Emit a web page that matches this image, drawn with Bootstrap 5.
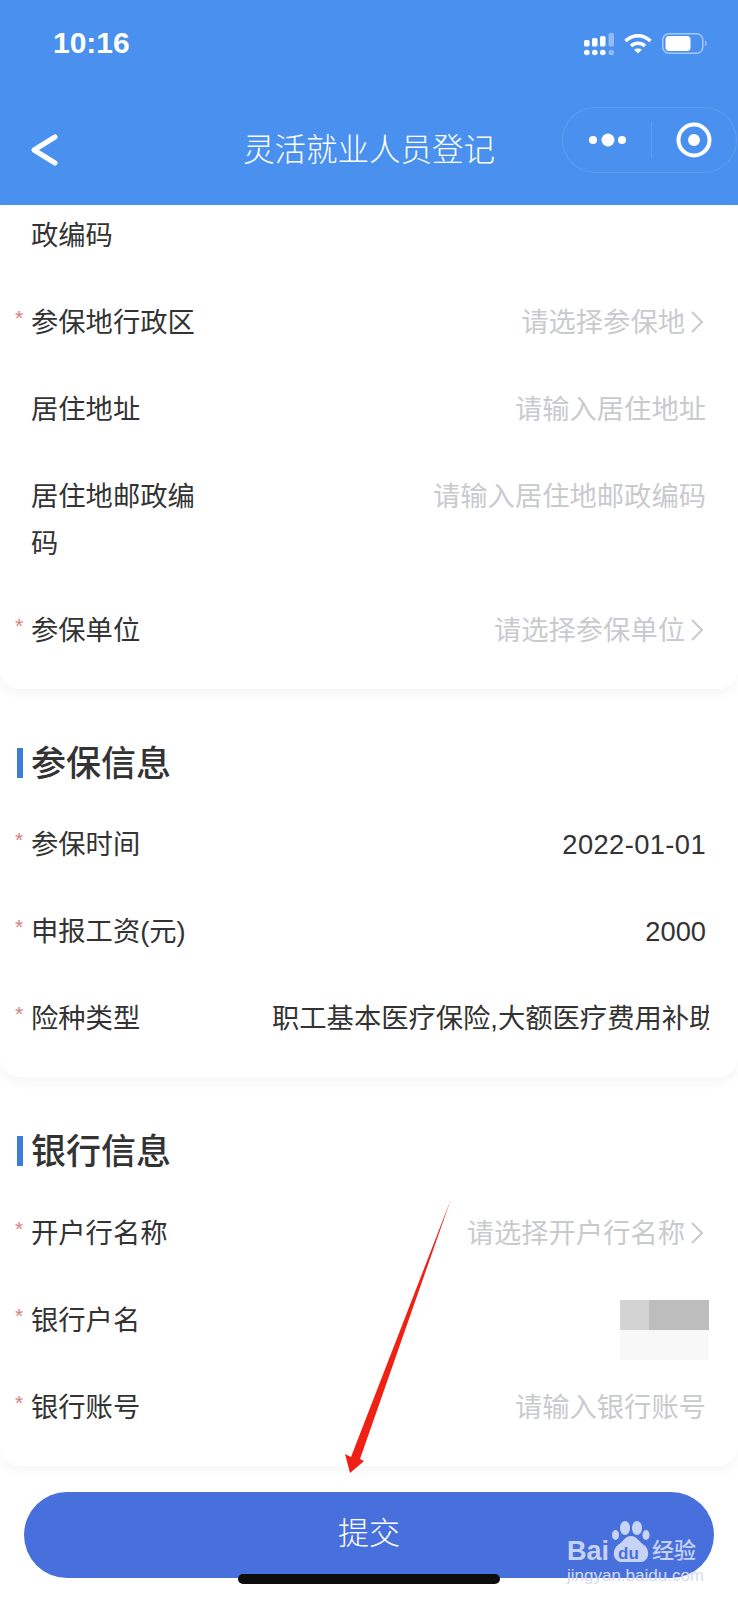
<!DOCTYPE html>
<html lang="zh-CN">
<head>
    <meta charset="UTF-8">
    <title>灵活就业人员登记</title>
    <link rel="stylesheet" href="https://cdn.jsdelivr.net/npm/bootstrap@5.3.0/dist/css/bootstrap.min.css">
    <style>
        html, body { height: 1600px; overflow: hidden; }
        body { font-family: "Liberation Sans", "Noto Sans CJK SC", sans-serif; color: #333; background: #fff; position: relative; }
        .app-head { height: 205px; background: #4a90ee; color: #fff; }
        .status-row { height: 107px; padding: 26px 31px 0 53px; }
        .clock { font-size: 30px; font-weight: 700; line-height: 34px; }
        .status-icons { gap: 10px; margin-top: 7px; }
        .title-row { height: 98px; position: relative; }
        .back-icon { position: absolute; left: 30px; top: 27px; }
        .page-title { position: absolute; left: 0; width: 738px; top: 21px; text-align: center; font-size: 31.5px; line-height: 44px; font-weight: 300; }
        .capsule { position: absolute; left: 562px; top: 0; width: 175px; height: 66px; border: 1px solid rgba(255,255,255,.12); border-radius: 33px; }
        .capsule-line { width: 1px; height: 36px; background: rgba(255,255,255,.12); }
        .form-card { border: 0; border-radius: 0 0 20px 20px; box-shadow: 0 6px 12px rgba(0,0,0,.035); background: #fff; }
        .first-card { padding-bottom: 15px; }
        .later-card { padding-bottom: 15px; margin-top: 24px; }
        .head-block { height: 88.5px; padding: 29px 0 0 17px; }
        .head-bar { width: 6px; height: 30px; background: #3b7dd8; margin: 6px 8px 0 0; }
        .head-text { font-size: 35px; line-height: 44px; font-weight: 500; color: #333; }
        .form-row { position: relative; padding: 20px 32px 20px 31px; font-size: 27.3px; line-height: 47px; }
        .form-row.cut-row { padding-top: 6.5px; }
        .form-row.need::before { content: "*"; position: absolute; left: 15px; top: 15px; font-size: 21px; color: #d98080; }
        .row-label { width: 166px; flex: none; color: #333; }
        .row-value { color: #333; }
        .date-value { letter-spacing: .4px; }
        .row-hint { color: #c9cace; }
        .row-clip { width: 437px; margin-left: auto; margin-right: -3px; overflow: hidden; white-space: nowrap; }
        .hint-chev { margin: 0 2px 0 5px; }
        .blur-box { width: 89px; height: 60px; margin: 3.5px -3px -16.5px 0; display: grid; grid-template-columns: 29px 60px; grid-template-rows: 30px 30px; }
        .blur-a { background: #d3d3d3; }
        .blur-b { background: #bdbdbd; }
        .blur-c { background: #f8f8f8; }
        .submit-wrap { padding: 26px 24px 23px 24px; }
        .submit-btn { height: 86px; width: 100%; background: #4870dc; border: 0; color: #fff; font-size: 31px; font-weight: 300; }
        .home-bar { position: absolute; left: 238px; top: 1574px; width: 262px; height: 10px; border-radius: 5px; background: #0d0d0d; }
        .red-arrow { position: absolute; left: 340px; top: 1195px; }
        .water-mark { position: absolute; left: 566px; top: 1518px; width: 140px; height: 70px; color: rgba(255,255,255,.7); }
        .wm-paw { position: absolute; left: 46px; top: 3px; }
        .wm-bai { position: absolute; left: 1px; top: 19px; font: 700 27px/28px "Liberation Sans", sans-serif; }
        .wm-du { position: absolute; left: 52px; top: 28px; font: 700 17px/16px "Liberation Sans", sans-serif; color: #4870dc; }
        .wm-cn { position: absolute; left: 86px; top: 19px; font-size: 22px; line-height: 28px; font-weight: 500; white-space: nowrap; }
        .wm-url { position: absolute; left: 1px; top: 47.5px; font: 400 17px/20px "Liberation Sans", sans-serif; white-space: nowrap; color: #d5dcf0; }
    </style>
</head>
<body>
<header class="app-head">
    <div class="status-row d-flex justify-content-between">
        <span class="clock">10:16</span>
        <div class="status-icons d-flex align-items-start">
            <svg width="30" height="23" viewBox="0 0 30 23" fill="#fff">
                <rect x="0" y="7" width="5.5" height="6.5" rx="1.5"/><circle cx="2.8" cy="19.5" r="2.8"/>
                <rect x="8" y="5" width="5.5" height="8.5" rx="1.5"/><circle cx="10.8" cy="19.5" r="2.8"/>
                <rect x="16" y="3" width="5.5" height="10.5" rx="1.5"/><circle cx="18.8" cy="19.5" r="2.8"/>
                <g opacity=".4"><rect x="24.5" y="0" width="5.5" height="13.5" rx="1.5"/><circle cx="27.3" cy="19.5" r="2.8"/></g>
            </svg>
            <svg width="28" height="21" viewBox="0 0 28 21" fill="none" stroke="#fff" stroke-width="3.6">
                <path d="M1.5 8C9 1 19 1 26.5 8"/>
                <path d="M7 13C11 9.3 17 9.3 21 13"/>
                <path d="M14 20.5L10 16.5C12 15 16 15 18 16.5Z" fill="#fff" stroke="none"/>
            </svg>
            <svg width="45" height="21" viewBox="0 0 45 21" fill="none">
                <rect x=".8" y=".8" width="40" height="19.4" rx="6" stroke="#fff" stroke-opacity=".5" stroke-width="1.5"/>
                <rect x="3.5" y="3" width="25" height="15" rx="3.5" fill="#fff"/>
                <path d="M43 7.5C45 8.5 45 12.5 43 13.5Z" fill="#fff" fill-opacity=".5"/>
            </svg>
        </div>
    </div>
    <div class="title-row">
        <svg class="back-icon" width="28" height="32" viewBox="0 0 28 32" fill="none" stroke="#fff" stroke-width="5" stroke-linecap="round" stroke-linejoin="round">
            <path d="M25 3L4 16L25 29"/>
        </svg>
        <div class="page-title">灵活就业人员登记</div>
        <div class="capsule d-flex align-items-center">
            <svg class="ms-4" width="42" height="16" viewBox="0 0 42 16" fill="#fff"><circle cx="6" cy="8" r="4"/><circle cx="21" cy="8" r="6.5"/><circle cx="35" cy="8" r="4"/></svg>
            <span class="capsule-line ms-auto"></span>
            <svg class="mx-4" width="36" height="36" viewBox="0 0 36 36" fill="none"><circle cx="18" cy="18" r="15.5" stroke="#fff" stroke-width="4"/><circle cx="18" cy="18" r="6" fill="#fff"/></svg>
        </div>
    </div>
</header>

<main>
    <section class="card form-card first-card">
        <div class="form-row cut-row d-flex"><span class="row-label">政编码</span></div>
        <div class="form-row need d-flex"><span class="row-label">参保地行政区</span><span class="row-hint ms-auto d-flex align-items-center">请选择参保地<svg class="hint-chev" width="14" height="24" viewBox="0 0 14 24" fill="none" stroke="#c9cace" stroke-width="2"><path d="M2 2L12 12L2 22"/></svg></span></div>
        <div class="form-row d-flex"><span class="row-label">居住地址</span><span class="row-hint ms-auto">请输入居住地址</span></div>
        <div class="form-row d-flex"><span class="row-label">居住地邮政编码</span><span class="row-hint ms-auto">请输入居住地邮政编码</span></div>
        <div class="form-row need d-flex"><span class="row-label">参保单位</span><span class="row-hint ms-auto d-flex align-items-center">请选择参保单位<svg class="hint-chev" width="14" height="24" viewBox="0 0 14 24" fill="none" stroke="#c9cace" stroke-width="2"><path d="M2 2L12 12L2 22"/></svg></span></div>
    </section>

    <section class="card form-card later-card">
        <div class="head-block d-flex align-items-start"><span class="head-bar"></span><span class="head-text">参保信息</span></div>
        <div class="form-row need d-flex"><span class="row-label">参保时间</span><span class="row-value date-value ms-auto">2022-01-01</span></div>
        <div class="form-row need d-flex"><span class="row-label">申报工资(元)</span><span class="row-value ms-auto">2000</span></div>
        <div class="form-row need d-flex"><span class="row-label">险种类型</span><span class="row-value row-clip">职工基本医疗保险,大额医疗费用补助</span></div>
    </section>

    <section class="card form-card later-card">
        <div class="head-block d-flex align-items-start"><span class="head-bar"></span><span class="head-text">银行信息</span></div>
        <div class="form-row need d-flex"><span class="row-label">开户行名称</span><span class="row-hint ms-auto d-flex align-items-center">请选择开户行名称<svg class="hint-chev" width="14" height="24" viewBox="0 0 14 24" fill="none" stroke="#c9cace" stroke-width="2"><path d="M2 2L12 12L2 22"/></svg></span></div>
        <div class="form-row need d-flex"><span class="row-label">银行户名</span><span class="blur-box ms-auto"><i class="blur-a"></i><i class="blur-b"></i><i class="blur-c"></i><i class="blur-c"></i></span></div>
        <div class="form-row need d-flex"><span class="row-label">银行账号</span><span class="row-hint ms-auto">请输入银行账号</span></div>
    </section>

    <div class="submit-wrap">
        <button type="button" class="btn submit-btn rounded-pill">提交</button>
    </div>
</main>

<div class="home-bar"></div>

<svg class="red-arrow" width="116" height="282" viewBox="0 0 116 282">
    <path d="M111 4L20 264L24 266L10 278L5 259L11 262Z" fill="#f02015"/>
</svg>

<div class="water-mark">
    <svg class="wm-paw" width="38" height="41" viewBox="0 0 38 41" fill="rgba(255,255,255,.7)">
        <ellipse cx="3.5" cy="14" rx="3.5" ry="5"/><ellipse cx="13" cy="7" rx="5" ry="7"/><ellipse cx="25" cy="7" rx="5" ry="7"/><ellipse cx="34" cy="14" rx="3.5" ry="5"/>
        <path d="M19 15C13 15 11 21 6 24C0 28 0 40 9 41C15 42 24 42 29 41C38 40 38 28 32 24C27 21 25 15 19 15Z"/>
    </svg>
    <span class="wm-bai">Bai</span>
    <span class="wm-du">du</span>
    <span class="wm-cn">经验</span>
    <span class="wm-url">jingyan.baidu.com</span>
</div>

<script src="https://cdn.jsdelivr.net/npm/bootstrap@5.3.0/dist/js/bootstrap.bundle.min.js"></script>
</body>
</html>
